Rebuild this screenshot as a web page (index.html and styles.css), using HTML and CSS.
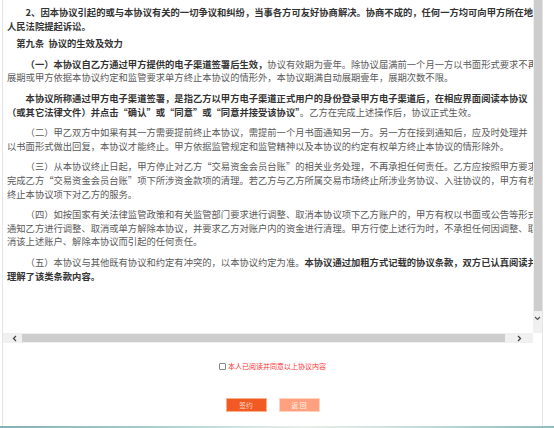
FILE: index.html
```html
<!DOCTYPE html>
<html lang="zh-CN">
<head>
<meta charset="utf-8">
<title>协议</title>
<link rel="stylesheet" href="styles.css">
</head>
<body>
<div class="panel">
  <div class="viewer">
    <div class="viewer-main">
      <div class="doc">
        <div class="para indent2"><span class="line b">2、因本协议引起的或与本协议有关的一切争议和纠纷，当事各方可友好协商解决。协商不成的，任何一方均可向甲方所在地</span><span class="line b">人民法院提起诉讼。</span></div>
        <div class="title">第九条&nbsp;&nbsp;协议的生效及效力</div>
        <div class="para indent2"><span class="line"><b>（一）本协议自乙方通过甲方提供的电子渠道签署后生效，</b>协议有效期为壹年。除协议届满前一个月一方以书面形式要求不再</span><span class="line">展期或甲方依据本协议约定和监管要求单方终止本协议的情形外，本协议期满自动展期壹年，展期次数不限。</span></div>
        <div class="para indent2"><span class="line b">本协议所称通过甲方电子渠道签署，是指乙方以甲方电子渠道正式用户的身份登录甲方电子渠道后，在相应界面阅读本协议</span><span class="line"><b>（或其它法律文件）并点击“确认”或“同意”或“同意并接受该协议”</b>。乙方在完成上述操作后，协议正式生效。</span></div>
        <div class="para indent2"><span class="line">（二）甲乙双方中如果有其一方需要提前终止本协议，需提前一个月书面通知另一方。另一方在接到通知后，应及时处理并</span><span class="line">以书面形式做出回复，本协议才能终止。甲方依据监管规定和监管精神以及本协议的约定有权单方终止本协议的情形除外。</span></div>
        <div class="para indent2"><span class="line">（三）从本协议终止日起，甲方停止对乙方“交易资金会员台账”的相关业务处理，不再承担任何责任。乙方应按照甲方要求</span><span class="line">完成乙方“交易资金会员台账”项下所涉资金款项的清理。若乙方与乙方所属交易市场终止所涉业务协议、入驻协议的，甲方有权</span><span class="line">终止本协议项下对乙方的服务。</span></div>
        <div class="para indent2"><span class="line">（四）如按国家有关法律监管政策和有关监管部门要求进行调整、取消本协议项下乙方账户的，甲方有权以书面或公告等形式</span><span class="line">通知乙方进行调整、取消或单方解除本协议，并要求乙方对账户内的资金进行清理。甲方行使上述行为时，不承担任何因调整、取</span><span class="line">消该上述账户、解除本协议而引起的任何责任。</span></div>
        <div class="para indent2"><span class="line">（五）本协议与其他既有协议和约定有冲突的，以本协议约定为准。<b>本协议通过加粗方式记载的协议条款，双方已认真阅读并</b></span><span class="line b">理解了该类条款内容。</span></div>
      </div>
      <div class="vbar">
        <div class="vthumb"></div>
        <svg class="vdown" width="7" height="5" viewBox="0 0 7 5"><path d="M1 1 L3.5 3.5 L6 1" fill="none" stroke="#555" stroke-width="1.2"/></svg>
      </div>
    </div>
    <div class="hbar">
      <div class="hleft"><svg width="5" height="7" viewBox="0 0 5 7"><path d="M4 1 L1.5 3.5 L4 6" fill="none" stroke="#444" stroke-width="1.3"/></svg></div>
      <div class="hthumb"></div>
      <div class="hright"><svg width="5" height="7" viewBox="0 0 5 7"><path d="M1 1 L3.5 3.5 L1 6" fill="none" stroke="#444" stroke-width="1.3"/></svg></div>
      <div class="corner"></div>
    </div>
  </div>
  <div class="agree">
    <span class="checkbox"></span>
    <span class="agree-text">本人已阅读并同意以上协议内容</span>
  </div>
  <div class="actions">
    <span class="btn btn-sign">签约</span>
    <span class="btn btn-back">返&nbsp;回</span>
  </div>
</div>
<div class="strip"></div>
</body>
</html>
```

FILE: styles.css
```css
html, body {
  margin: 0;
  padding: 0;
}
body {
  width: 554px;
  height: 428px;
  overflow: hidden;
  background: #fff;
  font-family: "Noto Sans CJK SC", "Microsoft YaHei", sans-serif;
  display: flex;
  flex-direction: column;
}
.panel {
  box-sizing: border-box;
  width: 541px;
  height: 426px;
  margin-left: 2px;
  border-left: 1px solid #e4e4e4;
  border-right: 1px solid #e4e4e4;
  background: #fff;
  display: flex;
  flex-direction: column;
}
.viewer {
  display: flex;
  flex-direction: column;
  height: 343px;
}
.viewer-main {
  display: flex;
  height: 333px;
}
.doc {
  box-sizing: border-box;
  width: 530px;
  height: 333px;
  overflow: hidden;
  padding: 6px 0 0 4px;
  font-size: 9.3px;
  line-height: 13.6px;
  color: #5a5a5a;
}
.para {
  margin-bottom: 7px;
}
.line {
  display: block;
  white-space: nowrap;
}
.indent2 .line:first-child {
  text-indent: 2em;
}
.b, b {
  font-weight: bold;
  color: #333;
}
.title {
  font-weight: bold;
  color: #333;
  text-indent: 1em;
  white-space: nowrap;
  margin-top: -3px;
  margin-bottom: 7px;
}
.vbar {
  width: 9px;
  height: 333px;
  background: #f0f0f0;
  display: flex;
  flex-direction: column;
  align-items: center;
}
.vthumb {
  width: 8px;
  height: 311px;
  background: #cdcdcd;
}
.vdown {
  margin-top: 5px;
}
.hbar {
  height: 10px;
  display: flex;
  align-items: center;
  background: #f0f0f0;
}
.hleft {
  width: 19px;
  height: 10px;
  display: flex;
  align-items: center;
  padding-left: 9px;
  box-sizing: border-box;
}
.hthumb {
  width: 483px;
  height: 8px;
  background: #cdcdcd;
}
.hright {
  width: 28px;
  height: 10px;
  display: flex;
  align-items: center;
  justify-content: center;
}
.corner {
  width: 9px;
  height: 10px;
  background: #fff;
}
.agree {
  margin-top: 18px;
  height: 10px;
  display: flex;
  justify-content: center;
  align-items: center;
  gap: 2px;
}
.checkbox {
  box-sizing: border-box;
  width: 7px;
  height: 7px;
  border: 1px solid #888;
  border-radius: 1px;
  background: #fff;
}
.agree-text {
  font-size: 7px;
  line-height: 10px;
  color: #f33;
}
.actions {
  margin-top: 27px;
  display: flex;
  justify-content: center;
  gap: 12px;
}
.btn {
  box-sizing: border-box;
  width: 41px;
  height: 14px;
  display: flex;
  align-items: center;
  justify-content: center;
  font-size: 6.8px;
  line-height: 12px;
}
.btn-sign {
  background: #f15a22;
  border: 1px solid #f9b08c;
  color: #f4d6c8;
}
.btn-back {
  background: #ffa17f;
  border: 1px solid #ffd3c2;
  color: #fff1ea;
}
.strip {
  height: 2px;
  background: linear-gradient(90deg, #82b2b5 0%, #a6cacb 25%, #d3e5e3 45%, #e9efe9 55%, #c6dcdb 75%, #8fbbbd 100%);
}
```
